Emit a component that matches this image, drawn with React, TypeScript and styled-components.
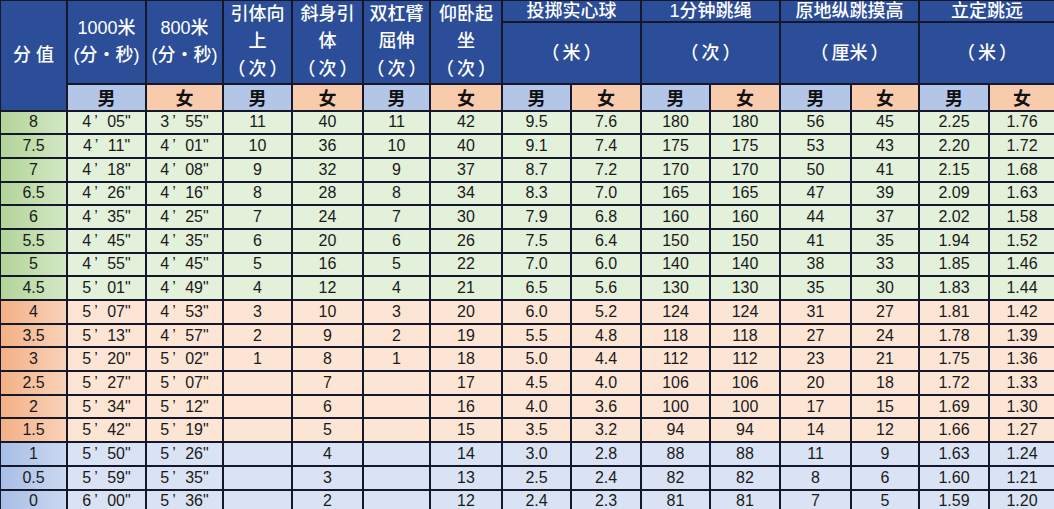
import React from 'react';
import styled, { createGlobalStyle } from 'styled-components';

const GlobalStyle = createGlobalStyle`
  html, body {
    margin: 0;
    padding: 0;
    background: #fff;
  }
  body {
    font-family: 'Liberation Sans', 'Noto Sans CJK SC', sans-serif;
  }
`;

const Frame = styled.div`
  width: 1054px;
  height: 509px;
  overflow: hidden;
`;

const Table = styled.table`
  width: 1056px;
  margin: -1px 0 0 -1px;
  border-collapse: collapse;
  table-layout: fixed;
`;

const HeadCell = styled.th<{ $h?: number }>`
  background: #2c4d98;
  color: #fff;
  border: 2px solid #14182a;
  font-family: 'Liberation Sans', 'Noto Sans CJK SC', sans-serif;
  font-size: 18px;
  font-weight: 500;
  line-height: 26.5px;
  padding: 0;
  text-align: center;
  vertical-align: middle;
  height: ${p => p.$h ?? 20}px;
  box-sizing: border-box;
`;

const GroupCell = styled(HeadCell)`
  line-height: 18px;
`;

const UnitText = styled.span`
  font-family: 'Noto Sans CJK SC', sans-serif;
`;

const UnitInner = styled.span`
  margin: 0 3px;
`;

const Unit: React.FC<{ children: string }> = ({ children }) => (
  <UnitText>
    （<UnitInner>{children}</UnitInner>）
  </UnitText>
);

const GenderCell = styled.th<{ $sex: 'm' | 'f' }>`
  background: ${p => (p.$sex === 'm' ? '#b4c6e7' : '#f8cbad')};
  color: #111;
  border: 2px solid #14182a;
  font-family: 'Noto Sans CJK SC', sans-serif;
  font-size: 18px;
  font-weight: 700;
  line-height: 20px;
  padding: 0;
  height: 27px;
  box-sizing: border-box;
`;

type Band = 'green' | 'orange' | 'blue';

const bandBg: Record<Band, string> = {
  green: '#e3f0da',
  orange: '#fde5d6',
  blue: '#dae3f3',
};

const bandScore: Record<Band, string> = {
  green: 'linear-gradient(to right, #b2d498, #d3e8c4)',
  orange: 'linear-gradient(to right, #f3b086, #f9d2b8)',
  blue: 'linear-gradient(to right, #a8bee6, #cad8f0)',
};

const Row = styled.tr``;

const ScoreCell = styled.td<{ $band: Band }>`
  background: ${p => bandScore[p.$band]};
  border: 2px solid #14182a;
  color: #1a1a1a;
  font-size: 16px;
  text-align: center;
  padding: 0;
  line-height: 18px;
  height: 23.7px;
  box-sizing: border-box;
`;

const Cell = styled.td<{ $band: Band }>`
  background: ${p => bandBg[p.$band]};
  border: 2px solid #14182a;
  color: #1a1a1a;
  font-size: 16px;
  text-align: center;
  padding: 0;
  line-height: 18px;
  height: 23.7px;
  box-sizing: border-box;
`;

const Prime = styled.span`
  display: inline-block;
  width: 16px;
  padding-left: 3px;
  box-sizing: border-box;
  text-align: left;
`;

const widths = [67, 79, 77, 69, 71, 67, 72, 69, 70, 69, 70, 71, 68, 70, 66];

type Rec = string[];

const rows: Rec[] = [
  ['8', '4|05', '3|55', '11', '40', '11', '42', '9.5', '7.6', '180', '180', '56', '45', '2.25', '1.76'],
  ['7.5', '4|11', '4|01', '10', '36', '10', '40', '9.1', '7.4', '175', '175', '53', '43', '2.20', '1.72'],
  ['7', '4|18', '4|08', '9', '32', '9', '37', '8.7', '7.2', '170', '170', '50', '41', '2.15', '1.68'],
  ['6.5', '4|26', '4|16', '8', '28', '8', '34', '8.3', '7.0', '165', '165', '47', '39', '2.09', '1.63'],
  ['6', '4|35', '4|25', '7', '24', '7', '30', '7.9', '6.8', '160', '160', '44', '37', '2.02', '1.58'],
  ['5.5', '4|45', '4|35', '6', '20', '6', '26', '7.5', '6.4', '150', '150', '41', '35', '1.94', '1.52'],
  ['5', '4|55', '4|45', '5', '16', '5', '22', '7.0', '6.0', '140', '140', '38', '33', '1.85', '1.46'],
  ['4.5', '5|01', '4|49', '4', '12', '4', '21', '6.5', '5.6', '130', '130', '35', '30', '1.83', '1.44'],
  ['4', '5|07', '4|53', '3', '10', '3', '20', '6.0', '5.2', '124', '124', '31', '27', '1.81', '1.42'],
  ['3.5', '5|13', '4|57', '2', '9', '2', '19', '5.5', '4.8', '118', '118', '27', '24', '1.78', '1.39'],
  ['3', '5|20', '5|02', '1', '8', '1', '18', '5.0', '4.4', '112', '112', '23', '21', '1.75', '1.36'],
  ['2.5', '5|27', '5|07', '', '7', '', '17', '4.5', '4.0', '106', '106', '20', '18', '1.72', '1.33'],
  ['2', '5|34', '5|12', '', '6', '', '16', '4.0', '3.6', '100', '100', '17', '15', '1.69', '1.30'],
  ['1.5', '5|42', '5|19', '', '5', '', '15', '3.5', '3.2', '94', '94', '14', '12', '1.66', '1.27'],
  ['1', '5|50', '5|26', '', '4', '', '14', '3.0', '2.8', '88', '88', '11', '9', '1.63', '1.24'],
  ['0.5', '5|59', '5|35', '', '3', '', '13', '2.5', '2.4', '82', '82', '8', '6', '1.60', '1.21'],
  ['0', '6|00', '5|36', '', '2', '', '12', '2.4', '2.3', '81', '81', '7', '5', '1.59', '1.20'],
];

const bandOf = (i: number): Band => (i < 8 ? 'green' : i < 14 ? 'orange' : 'blue');

const renderValue = (v: string) => {
  if (!v.includes('|')) return v;
  const [m, s] = v.split('|');
  return (
    <>
      {m}
      <Prime>’</Prime>
      {s}"
    </>
  );
};

const genders: ('m' | 'f')[] = ['m', 'f', 'm', 'f', 'm', 'f', 'm', 'f', 'm', 'f', 'm', 'f', 'm', 'f'];

const App: React.FC = () => (
  <Frame>
    <GlobalStyle />
    <Table>
      <colgroup>
        {widths.map((w, i) => (
          <col key={i} style={{ width: w }} />
        ))}
      </colgroup>
      <thead>
        <tr>
          <HeadCell rowSpan={3}>分 值</HeadCell>
          <HeadCell rowSpan={2}>
            1000米
            <br />
            (分・秒)
          </HeadCell>
          <HeadCell rowSpan={2}>
            800米
            <br />
            (分・秒)
          </HeadCell>
          <HeadCell rowSpan={2}>
            引体向
            <br />
            上
            <br />
            <Unit>次</Unit>
          </HeadCell>
          <HeadCell rowSpan={2}>
            斜身引
            <br />
            体
            <br />
            <Unit>次</Unit>
          </HeadCell>
          <HeadCell rowSpan={2}>
            双杠臂
            <br />
            屈伸
            <br />
            <Unit>次</Unit>
          </HeadCell>
          <HeadCell rowSpan={2}>
            仰卧起
            <br />
            坐
            <br />
            <Unit>次</Unit>
          </HeadCell>
          <GroupCell colSpan={2}>投掷实心球</GroupCell>
          <GroupCell colSpan={2}>1分钟跳绳</GroupCell>
          <GroupCell colSpan={2}>原地纵跳摸高</GroupCell>
          <GroupCell colSpan={2}>立定跳远</GroupCell>
        </tr>
        <tr>
          <HeadCell colSpan={2} $h={57}><Unit>米</Unit></HeadCell>
          <HeadCell colSpan={2} $h={57}><Unit>次</Unit></HeadCell>
          <HeadCell colSpan={2} $h={57}><Unit>厘米</Unit></HeadCell>
          <HeadCell colSpan={2} $h={57}><Unit>米</Unit></HeadCell>
        </tr>
        <tr>
          {genders.map((g, i) => (
            <GenderCell key={i} $sex={g}>
              {g === 'm' ? '男' : '女'}
            </GenderCell>
          ))}
        </tr>
      </thead>
      <tbody>
        {rows.map((r, i) => {
          const band = bandOf(i);
          return (
            <Row key={r[0]}>
              <ScoreCell $band={band}>{r[0]}</ScoreCell>
              {r.slice(1).map((v, j) => (
                <Cell key={j} $band={band}>
                  {renderValue(v)}
                </Cell>
              ))}
            </Row>
          );
        })}
      </tbody>
    </Table>
  </Frame>
);

export default App;
